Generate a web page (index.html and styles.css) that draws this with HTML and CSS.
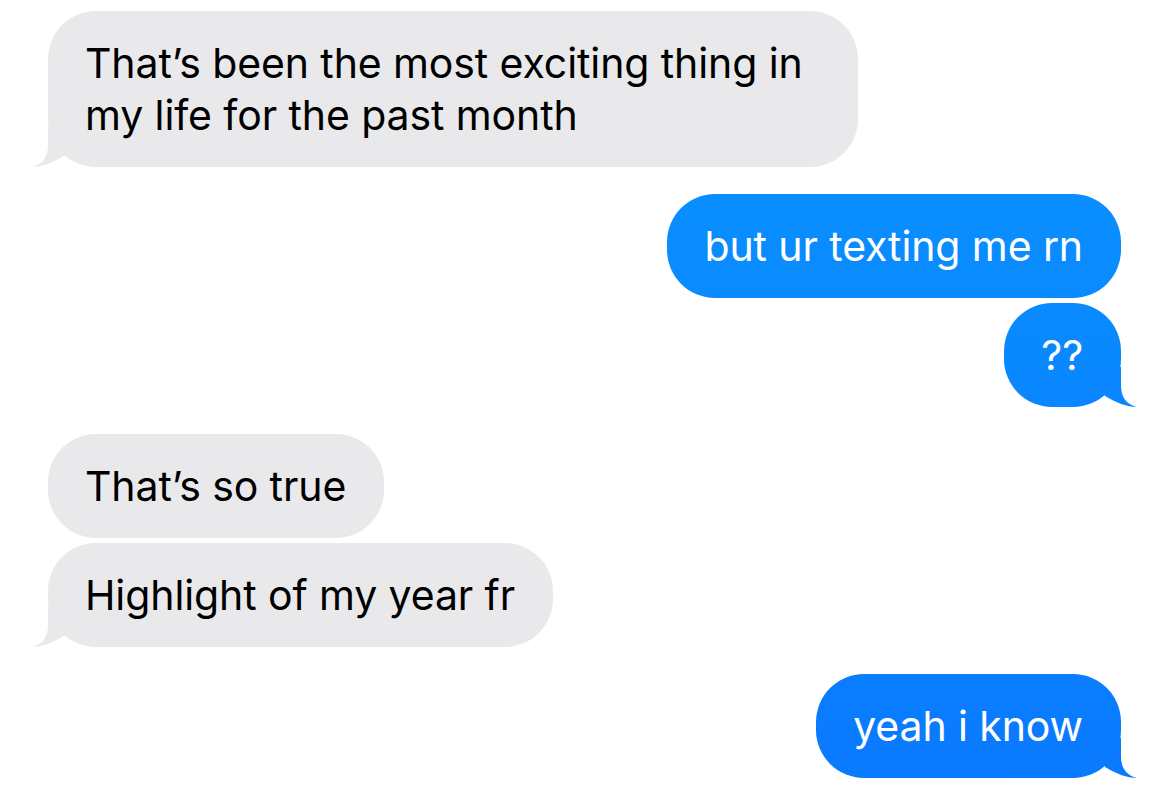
FILE: index.html
```html
<!DOCTYPE html>
<html lang="en">
<head>
  <meta charset="UTF-8" />
  <meta name="viewport" content="width=device-width, initial-scale=1.0"/>
  <title>Messages</title>
  <link rel="stylesheet" href="styles.css">
</head>
<body>
  <main class="thread">

    <!-- them -->
    <div class="group them">
      <p class="bubble tail">That’s been the most exciting thing in my life for the past month</p>
    </div>

    <!-- me -->
    <div class="group me">
      <p class="bubble">but ur texting me rn</p>
      <p class="bubble tail">??</p>
    </div>

    <div class="group them">
      <p class="bubble">That’s so true</p>
      <p class="bubble tail">Highlight of my year fr</p>
    </div>

    <div class="group me">
      <p class="bubble tail">yeah i know</p>
    </div>

  </main>
</body>
</html>
```

FILE: styles.css
```css
* {
  margin: 0;
  padding: 0;
  box-sizing: border-box;
}

body {
  font-family: Inter, "Noto Sans", sans-serif;
  background: #fff;
  color: #000;
}

.thread {
  display: flex;
  flex-direction: column;
  gap: 27px;
  padding: 11px 49px 0 48px;
}

.group {
  display: flex;
  flex-direction: column;
  gap: 5px;
}

.group.them {
  align-items: flex-start;
}

.group.me {
  align-items: flex-end;
}

.bubble {
  position: relative;
  max-width: 810px;
  padding: 26px 38px 26px 37px;
  border-radius: 48px;
  font-size: 41px;
  line-height: 52px;
  letter-spacing: -0.1px;
}

.them .bubble {
  background: #e9e9eb;
  color: #000;
}

.me .bubble {
  color: #fff;
  /* iMessage style: the blue shifts down the screen */
  background: linear-gradient(#0a95ff, #0a79ff) fixed;
}

/* the little tail on the last bubble of a group */
.tail::after {
  content: "";
  position: absolute;
  bottom: 0;
  width: 44px;
  height: 40px;
  background: inherit;
}

.me .tail::after {
  right: -20px;
  clip-path: path("M 24 0 L 24 18 C 24 30, 29 37, 40 40 C 30 40, 20 36, 8 29 L 0 0 Z");
}

.them .tail::after {
  left: -20px;
  clip-path: path("M 20 0 L 20 18 C 20 30, 15 37, 4 40 C 14 40, 24 36, 36 29 L 44 0 Z");
}
```
